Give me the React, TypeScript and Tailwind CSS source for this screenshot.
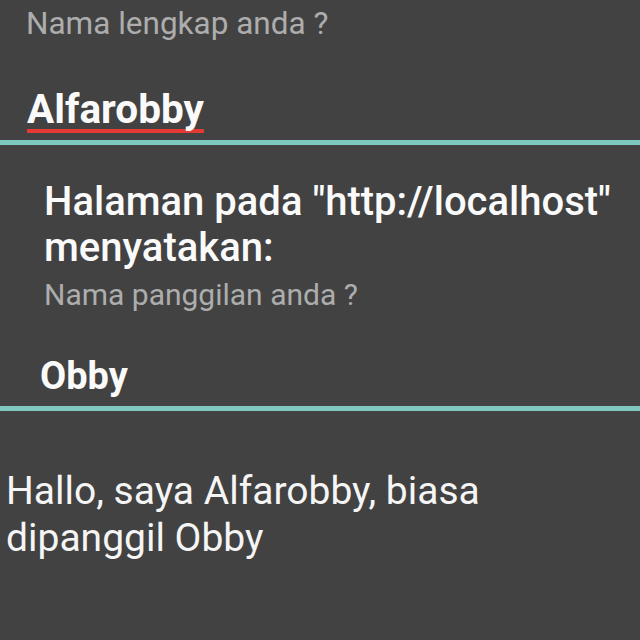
import React from "react";

const font = { fontFamily: "Roboto, 'Noto Sans', sans-serif" };

export default function App() {
  return (
    <div className="w-[640px] h-[640px] overflow-hidden bg-[#424242]" style={font}>
      {/* first prompt: full name */}
      <div className="pl-[26px] pt-[4px]">
        <p className="text-[31.5px] leading-[40px] text-[#adadad]">Nama lengkap anda ?</p>
        <div className="mt-[46px] h-[50px] flex items-start">
          <span className="ml-[1px] text-[40.5px] leading-[39px] font-bold text-[#fafafa] border-b-[4px] border-[#e53935]">
            Alfarobby
          </span>
        </div>
      </div>
      <div className="h-[5px] bg-[#7fc8c0]" />

      {/* second prompt: nickname */}
      <div className="pl-[44px] pt-[34px]">
        <h2 className="text-[40px] leading-[46px] font-medium text-[#fafafa]">
          Halaman pada "http://localhost"
          <br />
          menyatakan:
        </h2>
        <p className="mt-[6px] text-[30px] leading-[36px] text-[#adadad]">Nama panggilan anda ?</p>
        <div className="mt-[42px] h-[51px] -ml-[4px]">
          <span className="text-[38px] leading-[42px] font-bold text-[#fafafa]">Obby</span>
        </div>
      </div>
      <div className="h-[5px] bg-[#7fc8c0]" />

      {/* result */}
      <p className="pl-[6px] pt-[57px] text-[39px] leading-[47px] text-[#f5f5f5]">
        Hallo, saya Alfarobby, biasa
        <br />
        dipanggil Obby
      </p>
    </div>
  );
}
